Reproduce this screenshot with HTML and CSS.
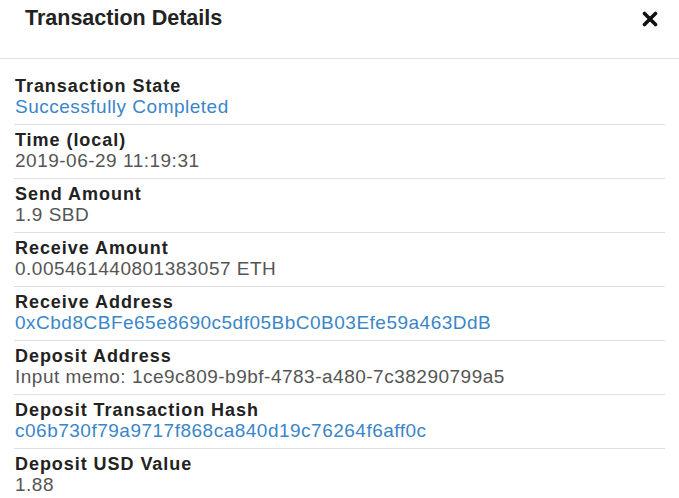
FILE: index.html
```html
<!DOCTYPE html>
<html>
<head>
<meta charset="utf-8">
<link rel="stylesheet" href="styles.css">
</head>
<body>
<div class="modal">
  <div class="modal-header">
    <h4 class="modal-title">Transaction Details</h4>
    <button class="close" aria-label="Close">
      <svg width="16" height="16" viewBox="0 0 16 16"><path d="M2.5 2.5 L13.5 13.5 M13.5 2.5 L2.5 13.5" stroke="#111" stroke-width="3.6" stroke-linecap="round"/></svg>
    </button>
  </div>
  <div class="modal-body">
    <div class="row"><div class="label">Transaction State</div><div class="value link">Successfully Completed</div></div>
    <div class="row"><div class="label">Time (local)</div><div class="value">2019-06-29 11:19:31</div></div>
    <div class="row"><div class="label">Send Amount</div><div class="value">1.9 SBD</div></div>
    <div class="row"><div class="label">Receive Amount</div><div class="value">0.005461440801383057 ETH</div></div>
    <div class="row"><div class="label">Receive Address</div><div class="value link">0xCbd8CBFe65e8690c5df05BbC0B03Efe59a463DdB</div></div>
    <div class="row"><div class="label">Deposit Address</div><div class="value">Input memo: 1ce9c809-b9bf-4783-a480-7c38290799a5</div></div>
    <div class="row"><div class="label">Deposit Transaction Hash</div><div class="value link">c06b730f79a9717f868ca840d19c76264f6aff0c</div></div>
    <div class="row last"><div class="label">Deposit USD Value</div><div class="value">1.88</div></div>
  </div>
</div>
</body>
</html>
```
FILE: styles.css
```css
html, body {
  margin: 0;
  padding: 0;
  background: #fff;
}
body {
  font-family: "Liberation Sans", Arial, sans-serif;
  color: #333;
  overflow: hidden;
}
.modal {
  width: 679px;
}
.modal-header {
  border-bottom: 1px solid #e0e0e0;
  display: flex;
  align-items: flex-start;
  justify-content: space-between;
  padding: 6px 20px 0 25px;
  box-sizing: border-box;
  height: 59px;
}
.modal-title {
  margin: 0;
  font-size: 21.5px;
  line-height: 24px;
  font-weight: bold;
  color: #222;
}
.close {
  border: 0;
  background: none;
  padding: 0;
  margin-top: 5px;
  margin-right: 1px;
  width: 16px;
  height: 16px;
  display: block;
}
.close svg { display: block; }
.modal-body {
  padding: 12px 14px 0 14px;
}
.row {
  padding: 5px 0 7px 1px;
  border-bottom: 1px solid #ddd;
}
.row.last { border-bottom: 0; }
.label {
  font-size: 18px;
  line-height: 20px;
  font-weight: bold;
  color: #222;
  letter-spacing: 0.95px;
}
.value {
  font-size: 19px;
  line-height: 21px;
  color: #555;
  letter-spacing: 0.5px;
}
.value.link {
  color: #3a86c8;
}
```
